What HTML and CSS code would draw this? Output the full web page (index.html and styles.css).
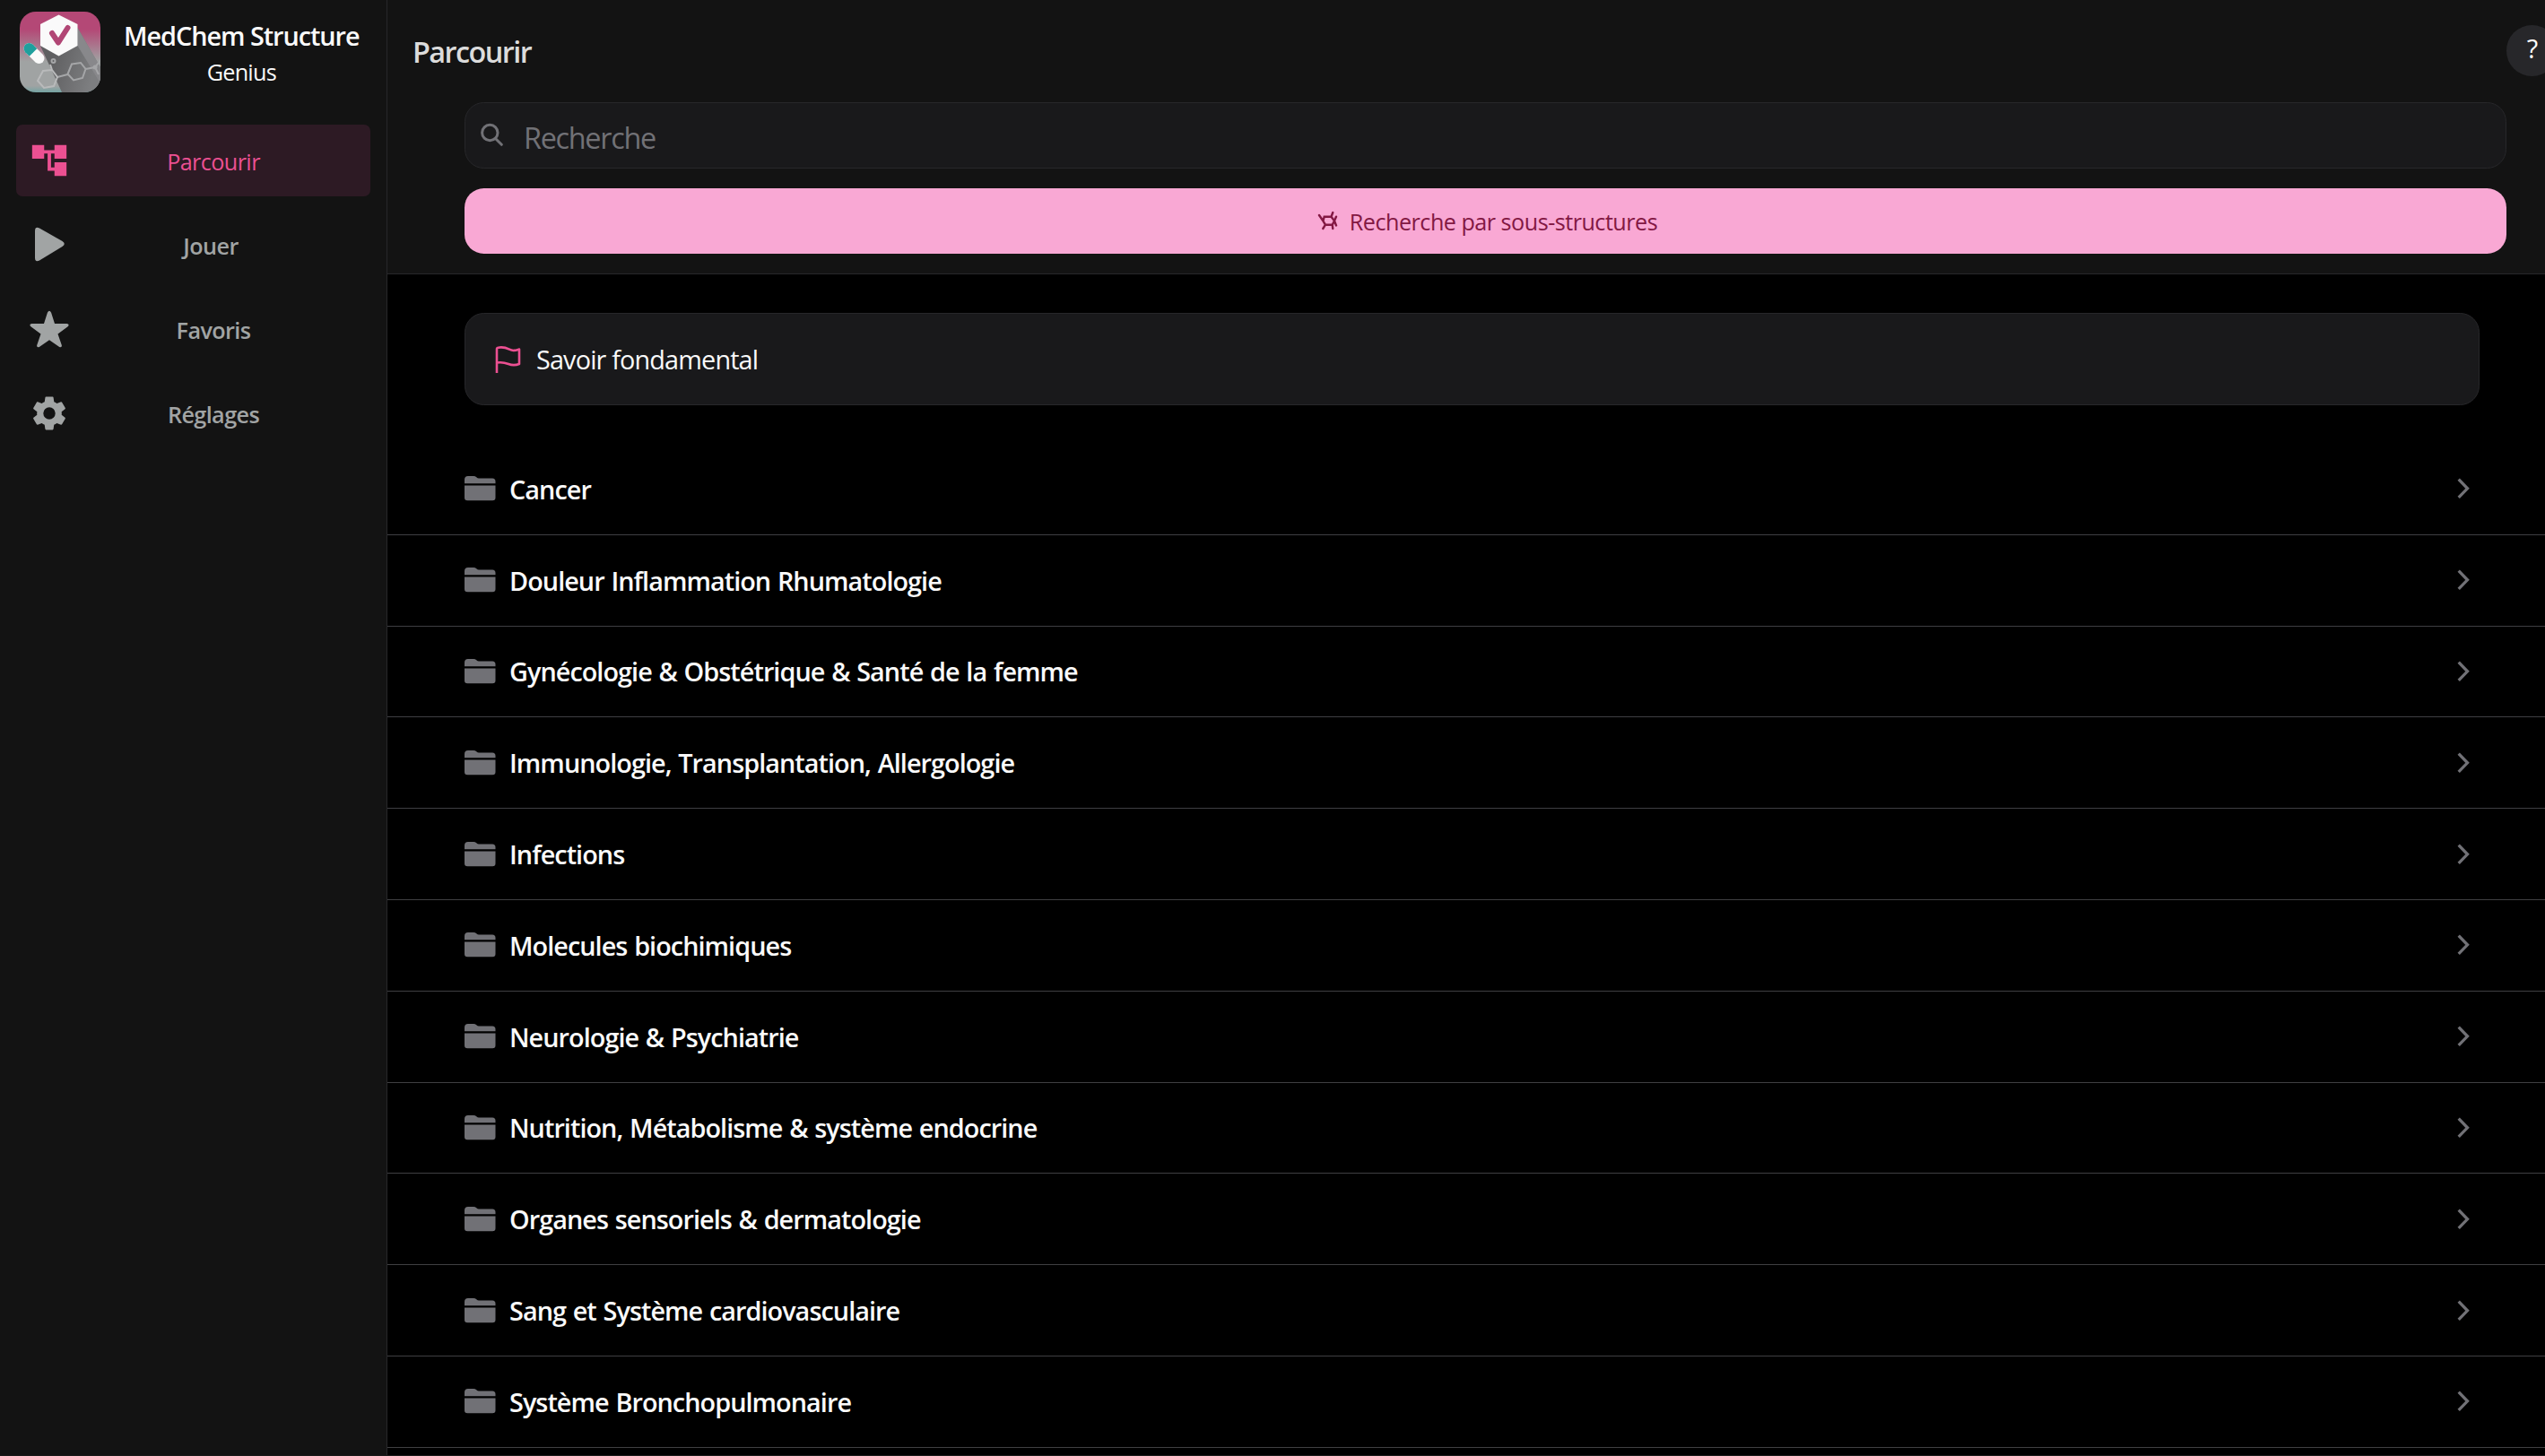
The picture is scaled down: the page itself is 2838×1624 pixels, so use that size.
FILE: index.html
```html
<!DOCTYPE html>
<html lang="fr">
<head>
  <meta charset="UTF-8">
  <title>MedChem Structure Genius</title>
  <link rel="stylesheet" href="styles.css">
</head>
<body>
  <!-- Shared icons -->
  <svg class="sprite">
    <symbol id="folder" viewBox="0 0 35 28">
      <path d="M0 8.2V4q0-4 4-4h6q2 0 3.3 1.2T16 2.4h15q3.5 0 3.5 3.5v2.3z"/>
      <path d="M0 10.4h34.5V24q0 3.3-3.3 3.3H3.3Q0 27.3 0 24z"/>
    </symbol>
    <symbol id="chevron" viewBox="0 0 14 24">
      <path d="M1.7 1.7L11.5 11.8L1.7 21.9" fill="none" stroke="currentColor" stroke-width="3.3"/>
    </symbol>
  </svg>

  <div class="app">
    <!-- Sidebar -->
    <aside class="sidebar">
      <div class="brand">
        <svg class="logo" viewBox="0 0 90 90">
          <defs>
            <linearGradient id="bg" x1="0" y1="0" x2="0" y2="1">
              <stop offset="0.22" stop-color="#b44876"/>
              <stop offset="0.62" stop-color="#a0a3a3"/>
              <stop offset="0.92" stop-color="#a0a3a3"/>
              <stop offset="1" stop-color="#74a3a2"/>
            </linearGradient>
            <linearGradient id="shade" x1="0" y1="0" x2="1" y2="0.3">
              <stop offset="0.3" stop-color="#5f5f61"/>
              <stop offset="1" stop-color="#7d7e80"/>
            </linearGradient>
            <clipPath id="round"><rect width="90" height="90" rx="18"/></clipPath>
          </defs>
          <g clip-path="url(#round)">
            <rect width="90" height="90" fill="url(#bg)"/>
            <path d="M23 38L47 90H90V62L64.5 18z" fill="url(#shade)"/>
            <path d="M64.5 18L90 62V80L64.5 38z" fill="#88888b"/>
            <g fill="none" stroke="#a5a6a8" stroke-width="2">
              <path d="M58 58.5L68 57L73.5 64L70 74L60 76.5L53.5 69.5zM53.5 70L42 73M73.5 64L84 62L90 54M84 62L88 70"/>
              <circle cx="37.5" cy="55" r="2"/>
            </g>
            <path d="M26 66L36 65L42 73L38 83L27 85L20 77zM36 65L34 59" fill="none" stroke="#b9babb" stroke-width="2"/>
            <circle cx="84" cy="62" r="2.5" fill="#a5a6a8"/>
            <path d="M43.5 3.5L64.5 14V38L43.5 49.5L23 38V14z" fill="#fafafa"/>
            <path d="M36 24L43 34.5L53.5 18" fill="none" stroke="#b14675" stroke-width="6" stroke-linecap="round" stroke-linejoin="round"/>
            <path d="M10.5 41L21.5 52" stroke="#fafafa" stroke-width="12" stroke-linecap="round"/>
            <path d="M10.5 41L15 45.500" stroke="#1f9f9d" stroke-width="12"/>
            <circle cx="10.5" cy="41" r="6" fill="#1f9f9d"/>
          </g>
        </svg>
        <div class="brand-text">
          <div class="brand-name">MedChem Structure</div>
          <div class="brand-sub">Genius</div>
        </div>
      </div>

      <nav class="menu">
        <a class="menu-item active">
          <svg viewBox="0 0 24 24"><path d="M22 11V3h-7v3H9V3H2v8h7V8h2v10h4v3h7v-8h-7v3h-2V8h2v3z"/></svg>
          <span>Parcourir</span>
        </a>
        <a class="menu-item">
          <svg viewBox="0 0 46 46"><path d="M7 7.500q0-5.500 5-3L37.500 19q4.500 3 0 6L12 40.500q-5 2.500-5-3z"/></svg>
          <span class="short">Jouer</span>
        </a>
        <a class="menu-item">
          <svg viewBox="0 0 46 46"><path d="M20.900 4.800q2.100-4.200 4.200 0L29 17h13.500q3.800.600.800 3.500L32.500 28.500l4.300 12.400q.6 3.200-2.600 2.100L23 35.300 11.800 43q-3.200 1.100-2.600-2.100l4.300-12.400L2.700 20.500Q-.300 17.600 3.500 17H17z"/></svg>
          <span>Favoris</span>
        </a>
        <a class="menu-item">
          <svg viewBox="0 0 24 24"><path d="M19.140 12.940c.04-.3.06-.61.06-.94 0-.32-.02-.64-.07-.94l2.030-1.580a.49.49 0 0 0 .12-.61l-1.920-3.320a.488.488 0 0 0-.59-.22l-2.390.96c-.5-.38-1.030-.7-1.620-.94l-.36-2.540a.484.484 0 0 0-.48-.41h-3.840c-.24 0-.43.17-.47.41l-.36 2.540c-.59.24-1.130.57-1.620.94l-2.390-.96c-.22-.08-.47 0-.59.22L2.740 8.870c-.12.21-.08.47.12.61l2.030 1.580c-.05.3-.09.63-.09.94s.02.64.07.94l-2.030 1.580a.49.49 0 0 0-.12.61l1.920 3.320c.12.22.37.29.59.22l2.390-.96c.5.38 1.030.7 1.620.94l.36 2.540c.05.24.24.41.48.41h3.840c.24 0 .44-.17.47-.41l.36-2.540c.59-.24 1.130-.56 1.620-.94l2.390.96c.22.08.47 0 .59-.22l1.920-3.320c.12-.22.07-.47-.12-.61l-2.010-1.580zM12 15.500a3.500 3.500 0 1 1 0-7 3.500 3.500 0 0 1 0 7z"/></svg>
          <span>Réglages</span>
        </a>
      </nav>
    </aside>

    <!-- Main -->
    <main class="main">
      <header class="header">
        <div class="title-row">
          <h1>Parcourir</h1>
          <button class="help">?</button>
        </div>
        <div class="search">
          <svg viewBox="0 0 26 26"><circle cx="11.3" cy="11" r="8.7"/><path d="M17.5 17.5L24.3 24.3"/></svg>
          <input type="text" placeholder="Recherche">
        </div>
        <button class="structure-button">
          <svg viewBox="0 0 24 24">
            <path d="M8.7 7.7H16.5L20 12.3L17.7 16.7H10L7.5 12.5zM3 6L7.5 12.5M16.5 7.7L18.3 3M20 12.3L22 7.7M20 12.3L22 17.5M17.7 16.7L18.3 21M10 16.7L7.3 21"/>
          </svg>
          <span>Recherche par sous-structures</span>
        </button>
      </header>

      <div class="content">
        <a class="card">
          <svg viewBox="0 0 30 32"><path d="M2 30V3.5Q2 1.900 3.5 1.700C8 .8 12 1.700 16 3.700S22 5 27 3.500V20C22 21.800 19 21.500 15 20S6 17.800 2 18.600"/></svg>
          <span>Savoir fondamental</span>
        </a>

        <!-- Categories -->
        <ul class="list">
          <li><svg class="folder"><use href="#folder"/></svg><span>Cancer</span><svg class="chevron"><use href="#chevron"/></svg></li>
          <li><svg class="folder"><use href="#folder"/></svg><span>Douleur Inflammation Rhumatologie</span><svg class="chevron"><use href="#chevron"/></svg></li>
          <li><svg class="folder"><use href="#folder"/></svg><span>Gynécologie &amp; Obstétrique &amp; Santé de la femme</span><svg class="chevron"><use href="#chevron"/></svg></li>
          <li><svg class="folder"><use href="#folder"/></svg><span>Immunologie, Transplantation, Allergologie</span><svg class="chevron"><use href="#chevron"/></svg></li>
          <li><svg class="folder"><use href="#folder"/></svg><span>Infections</span><svg class="chevron"><use href="#chevron"/></svg></li>
          <li><svg class="folder"><use href="#folder"/></svg><span>Molecules biochimiques</span><svg class="chevron"><use href="#chevron"/></svg></li>
          <li><svg class="folder"><use href="#folder"/></svg><span>Neurologie &amp; Psychiatrie</span><svg class="chevron"><use href="#chevron"/></svg></li>
          <li><svg class="folder"><use href="#folder"/></svg><span>Nutrition, Métabolisme &amp; système endocrine</span><svg class="chevron"><use href="#chevron"/></svg></li>
          <li><svg class="folder"><use href="#folder"/></svg><span>Organes sensoriels &amp; dermatologie</span><svg class="chevron"><use href="#chevron"/></svg></li>
          <li><svg class="folder"><use href="#folder"/></svg><span>Sang et Système cardiovasculaire</span><svg class="chevron"><use href="#chevron"/></svg></li>
          <li><svg class="folder"><use href="#folder"/></svg><span>Système Bronchopulmonaire</span><svg class="chevron"><use href="#chevron"/></svg></li>
        </ul>
      </div>
    </main>
  </div>
</body>
</html>
```

FILE: styles.css
```css
* { box-sizing: border-box; }
body {
  margin: 0;
  background: #000;
  color: #fafafa;
  font-family: "Segoe UI", "Open Sans", "Noto Sans", sans-serif;
  font-size: 28.8px;
  letter-spacing: -0.95px;
  overflow: hidden;
}
button, input { font-family: inherit; letter-spacing: inherit; }
svg { display: block; flex: none; fill: currentColor; }
.sprite { display: none; }
.app { display: flex; height: 100vh; border-bottom: 1px solid #1b1b1b; }

/* Sidebar */
.sidebar { width: 432px; flex: none; background: #131313; border-right: 1px solid #27272a; }
.brand { display: flex; padding: 13px 0 0 22px; height: 139px; }
.logo { width: 90px; height: 90px; }
.brand-text { margin-left: 26px; padding-top: 7px; text-align: center; line-height: 40px; white-space: nowrap; }
.brand-name { font-weight: 600; letter-spacing: -1.03px; }
.brand-sub { font-size: 25.2px; letter-spacing: -0.74px; }
.menu { display: flex; flex-direction: column; gap: 14px; padding: 0 18px; }
.menu-item {
  display: flex;
  align-items: center;
  height: 80px;
  padding: 0 15px 0 14px;
  border-radius: 7px;
  color: #a1a4a4;
  font-size: 25.2px;
  font-weight: 600;
  letter-spacing: -0.6px;
}
.menu-item svg { width: 46px; height: 46px; }
.menu-item span { flex: 1; padding-top: 2px; text-align: center; }
.menu-item .short { padding-right: 6px; }
.menu-item.active { background: #2d1a24; color: #ec5092; font-weight: 500; }

/* Header */
.main { flex: 1; min-width: 0; overflow: hidden; }
.header {
  display: flex;
  flex-direction: column;
  height: 306px;
  padding: 28px 43px 0 28px;
  background: #131313;
  border-bottom: 1px solid #27272a;
}
.title-row { display: flex; justify-content: space-between; align-items: center; height: 57px; margin-right: -57px; }
.title-row h1 { margin: 0; padding-top: 1px; color: #dcdcdc; font-size: 32.4px; font-weight: 600; letter-spacing: -1.55px; }
.help {
  width: 57px;
  height: 57px;
  padding: 0 0 6px;
  border: none;
  border-radius: 50%;
  background: #27272a;
  color: #fff;
  font-size: 28.8px;
  font-weight: 500;
}
.search {
  display: flex;
  align-items: center;
  height: 74px;
  margin: 29px 0 22px 58px;
  padding-left: 16px;
  background: #19191b;
  border: 1px solid #27272a;
  border-radius: 21.6px;
  color: #717176;
}
.search svg { width: 26px; height: 26px; margin-bottom: 2px; fill: none; stroke: currentColor; stroke-width: 3; stroke-linecap: round; }
.search input {
  flex: 1;
  padding: 3px 0 0;
  margin-left: 23px;
  border: none;
  outline: none;
  background: none;
  color: #fafafa;
  font-size: 32.4px;
  letter-spacing: -1.3px;
}
.search input::placeholder { color: #717176; }
.structure-button {
  display: flex;
  align-items: center;
  justify-content: center;
  height: 73px;
  margin-left: 58px;
  padding: 1px 0 0 3px;
  border: none;
  border-radius: 21.6px;
  background: #f9a8d4;
  color: #831843;
  font-size: 25.2px;
  font-weight: 500;
  letter-spacing: -0.52px;
}
.structure-button svg { width: 24px; height: 24px; margin: 0 13px 3px 0; fill: none; stroke: currentColor; stroke-width: 2.4; stroke-linecap: round; }

/* Content */
.content { padding-top: 43px; }
.card {
  display: flex;
  align-items: center;
  height: 103px;
  margin: 0 73px 43px 86px;
  padding-left: 33px;
  background: #19191b;
  border: 1px solid #27272a;
  border-radius: 21.6px;
  letter-spacing: -0.84px;
}
.card svg { width: 30px; height: 32px; margin: 3px 16px 0 0; fill: none; stroke: #ec5092; stroke-width: 2.6; stroke-linejoin: round; }
.list { margin: 0; padding: 0; list-style: none; font-weight: 600; word-spacing: 1.2px; }
.list li {
  display: flex;
  align-items: center;
  height: 101.8px;
  padding: 0 84px 0 86px;
  border-bottom: 1px solid #3f3f42;
}
.list span { flex: 1; margin-left: 15px; }
.folder { width: 35px; height: 28px; color: #717176; }
.chevron { width: 14px; height: 24px; color: #717176; }
```
